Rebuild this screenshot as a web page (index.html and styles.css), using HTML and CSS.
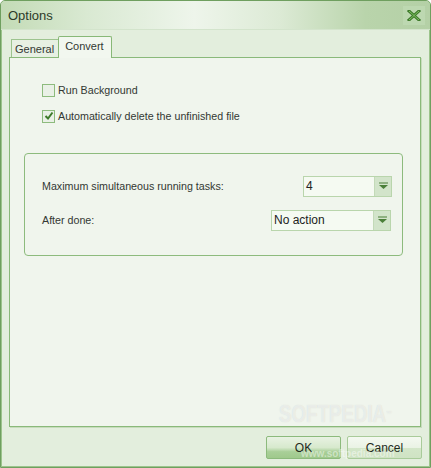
FILE: index.html
```html
<!DOCTYPE html>
<html>
<head>
<meta charset="utf-8">
<link rel="stylesheet" href="styles.css">
</head>
<body>
<div class="window">
  <div class="titlebar">
    <span class="title">Options</span>
    <span class="close">
      <svg width="14" height="11" viewBox="0 0 14 11"><path d="M2 1 L12 10 M12 1 L2 10" stroke="#3f7a2c" stroke-width="3" stroke-linecap="square"/><path d="M2 1 L12 10 M12 1 L2 10" stroke="#7cc060" stroke-width="1"/></svg>
    </span>
  </div>
  <div class="body">
    <div class="tabs">
      <div class="tab">General</div>
      <div class="tab active">Convert</div>
    </div>
    <div class="panel">
      <div class="checks">
        <label class="check"><span class="box"></span>Run Background</label>
        <label class="check"><span class="box"><svg width="10" height="10" viewBox="0 0 10 10"><path d="M1.5 5 L4 7.5 L8.5 1.5" fill="none" stroke="#3d7a2a" stroke-width="2"/></svg></span>Automatically delete the unfinished file</label>
      </div>
      <div class="group">
        <div class="row">
          <span class="label">Maximum simultaneous running tasks:</span>
          <div class="combo combo-small"><span class="val">4</span><span class="drop"><svg width="9" height="8" viewBox="0 0 9 8"><path d="M0 1h9" stroke="#4b7f39" stroke-width="1"/><path d="M0 3h9l-4.5 4z" fill="#4b7f39"/></svg></span></div>
        </div>
        <div class="row">
          <span class="label">After done:</span>
          <div class="combo combo-wide"><span class="val">No action</span><span class="drop"><svg width="9" height="8" viewBox="0 0 9 8"><path d="M0 1h9" stroke="#4b7f39" stroke-width="1"/><path d="M0 3h9l-4.5 4z" fill="#4b7f39"/></svg></span></div>
        </div>
      </div>
    </div>
    <div class="footer">
      <div class="watermark">SOFTPEDIA<span class="tm">™</span></div>
      <button class="btn default">OK</button>
      <button class="btn">Cancel</button>
      <div class="watermark2">www.softpedia.com</div>
    </div>
  </div>
</div>
</body>
</html>
```

FILE: styles.css
```css
html, body {
  margin: 0;
  padding: 0;
  background: #ffffff;
}
body {
  font-family: "Liberation Sans", Arial, sans-serif;
  font-size: 10.7px;
  color: #333833;
}
.window {
  width: 431px;
  height: 468px;
  box-sizing: border-box;
  border: 1px solid #6f9f5f;
  box-shadow: inset 1px 0 0 #9cc48c, inset -1px 0 0 #9cc48c, inset 0 -1px 0 #9cc48c;
  background: #e3eedd;
  display: flex;
  flex-direction: column;
  border-radius: 5px 5px 0 0;
  overflow: hidden;
}
.titlebar {
  height: 28px;
  flex: none;
  display: flex;
  align-items: center;
  justify-content: space-between;
  padding: 0 5px 0 7px;
  background: linear-gradient(to right, #c3dbb6 0%, #d9e9d2 20%, #eef5eb 45%, #dcead5 65%, #b9d4ab 85%, #b4d0a6 100%);
  border-bottom: 1px solid #d3e4cc;
}
.title {
  font-size: 13px;
  color: #2c3a28;
  padding-top: 1px;
}
.close {
  width: 22px;
  height: 19px;
  display: flex;
  align-items: center;
  justify-content: center;
  background: #bdd8b1;
  margin-top: 1px;
}
.body {
  flex: 1;
  display: flex;
  flex-direction: column;
  padding: 6px 8px 0 8px;
}
.tabs {
  display: flex;
  align-items: flex-end;
  height: 21px;
  padding-left: 2px;
  position: relative;
  z-index: 1;
}
.tab {
  height: 18px;
  box-sizing: border-box;
  padding: 3px 4px 0 3px;
  border: 1px solid #9dc48f;
  border-bottom: none;
  border-right: none;
  background: #e7f0e3;
  color: #333833;
  font-size: 11px;
}
.tab.active {
  padding: 3px 7px 0 6px;
  border: 1px solid #88b877;
  border-bottom: none;
  background: #f2f7ef;
  border-radius: 2px 2px 0 0;
  margin-bottom: -1px;
  height: 22px;
}
.panel {
  height: 370px;
  box-sizing: border-box;
  border: 1px solid #8ab97a;
  background: #f0f5ed;
  box-shadow: 1px 1px 0 #c7dcbc;
  margin-right: 1px;
  padding: 25px 17px 0 14px;
}
.checks {
  display: flex;
  flex-direction: column;
  gap: 12px;
  padding-left: 18px;
}
.check {
  display: flex;
  align-items: center;
  gap: 3px;
  height: 14px;
}
.box {
  width: 11px;
  height: 11px;
  border: 1px solid #8dbb7d;
  background: #e9f0e6;
  display: flex;
  align-items: center;
  justify-content: center;
}
.group {
  margin-top: 30px;
  height: 103px;
  box-sizing: border-box;
  border: 1px solid #8dbb7d;
  border-radius: 4px;
  padding: 22px 9px 0 17px;
  display: flex;
  flex-direction: column;
  gap: 14px;
}
.row {
  display: flex;
  justify-content: space-between;
  align-items: center;
  height: 20px;
}
.combo {
  height: 21px;
  box-sizing: border-box;
  border: 1px solid #b9d5ac;
  background: #f5faf2;
  display: flex;
  align-items: stretch;
}
.combo-small { width: 89px; margin-right: 1px; }
.combo-wide { width: 120px; margin-right: 2px; }
.val {
  flex: 1;
  padding-left: 2px;
  display: flex;
  align-items: center;
  font-size: 12px;
  color: #222;
}
.drop {
  width: 16px;
  background: #d2e4ca;
  border-left: 1px solid #c3dab8;
  display: flex;
  align-items: center;
  justify-content: center;
}
.footer {
  flex: 1;
  display: flex;
  justify-content: flex-end;
  align-items: flex-start;
  gap: 6px;
  padding-top: 9px;
  position: relative;
}
.watermark {
  position: absolute;
  left: 270px;
  top: -27px;
  font-family: "Liberation Sans", sans-serif;
  font-weight: bold;
  font-size: 24px;
  line-height: 28px;
  letter-spacing: 0;
  transform: scaleX(0.78);
  transform-origin: left top;
  color: rgba(255,255,255,0.55);
  text-shadow: 0 0 1px rgba(150,160,150,0.35);
  pointer-events: none;
  white-space: nowrap;
}
.tm { font-size: 7px; vertical-align: top; }
.watermark2 {
  position: absolute;
  left: 292px;
  top: 21px;
  font-family: "Liberation Sans", sans-serif;
  font-weight: bold;
  font-size: 10px;
  color: rgba(255,255,255,0.45);
  pointer-events: none;
  white-space: nowrap;
}
.btn {
  width: 75px;
  height: 23px;
  font-family: "Liberation Sans", Arial, sans-serif;
  font-size: 12px;
  color: #1f2a1c;
  border: 1px solid #a9cb9a;
  border-radius: 2px;
  background: linear-gradient(to bottom, #f4f9f1 0%, #eaf3e5 50%, #d3e6c9 52%, #cfe3c4 100%);
  padding: 0;
}
.btn.default {
  border-color: #8cba7c;
  background: linear-gradient(to bottom, #e8f2e2 0%, #d7e9cd 50%, #a9cf98 70%, #9fc98c 100%);
}
```
